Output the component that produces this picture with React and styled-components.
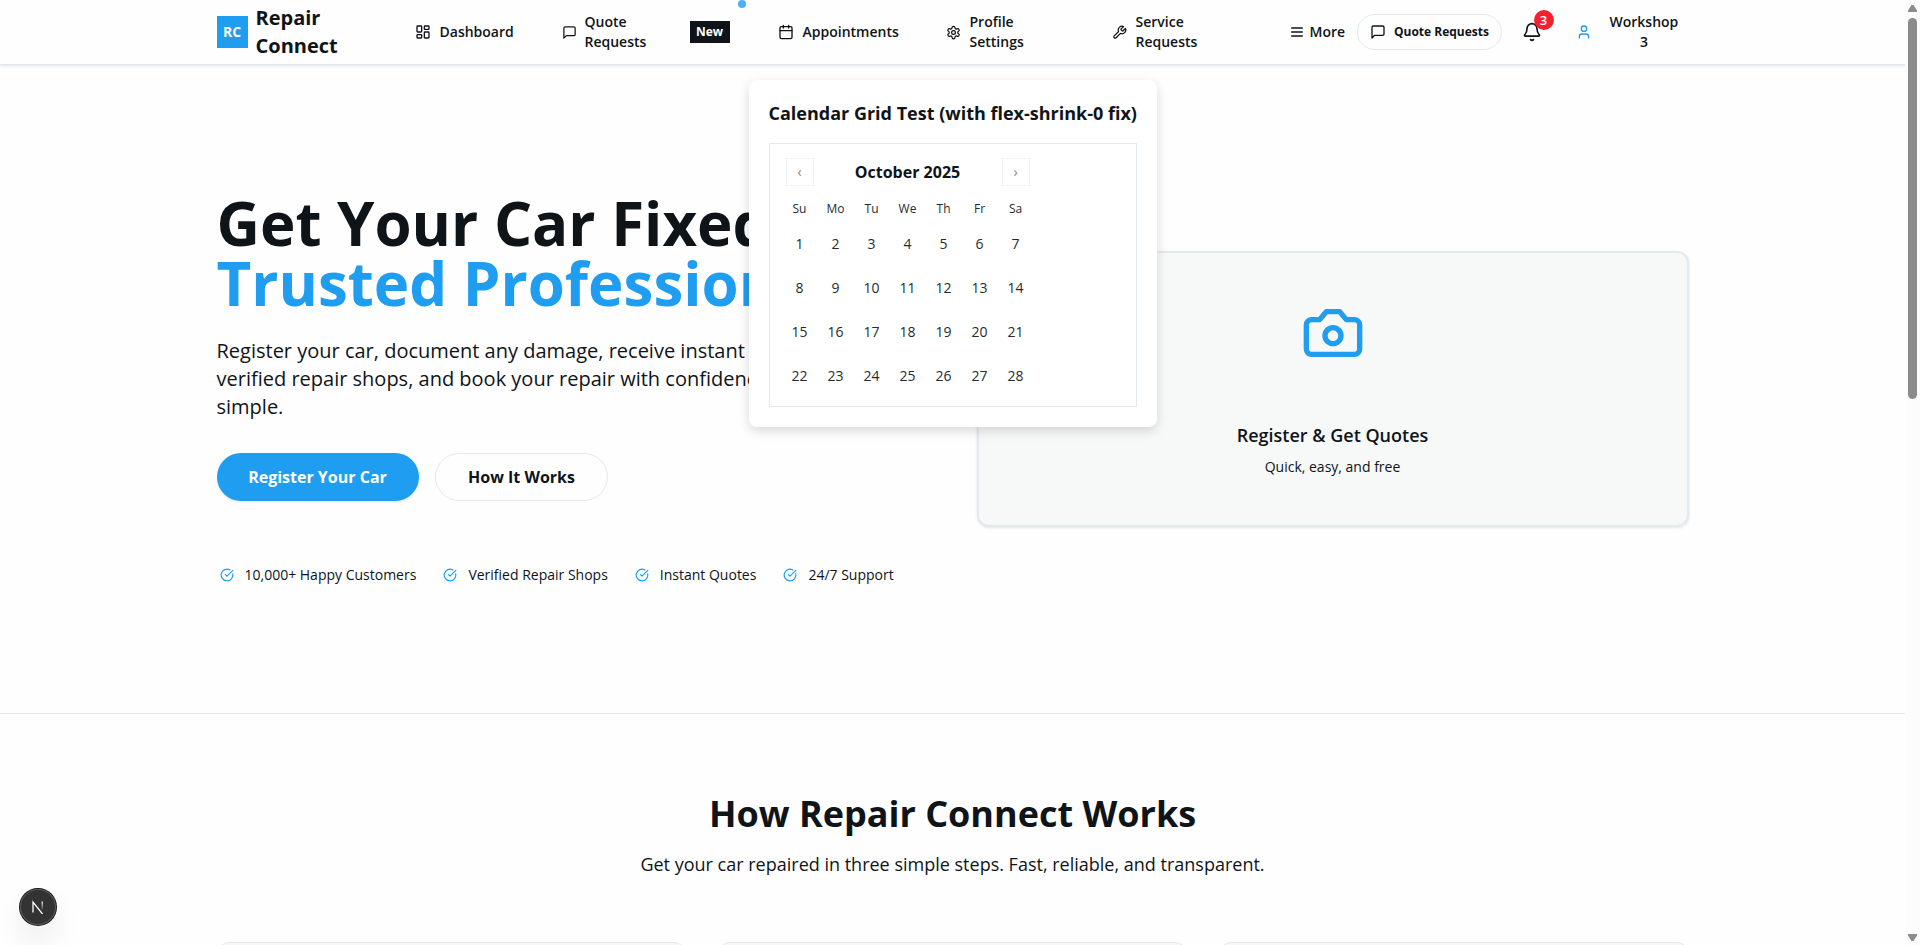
import React from "react";
import styled, { createGlobalStyle, css } from "styled-components";

const Global = createGlobalStyle`
  * { box-sizing: border-box; }
  html, body { margin: 0; height: 945px; overflow: hidden; }
  body { background: #fefefe; color: #0f1419; font-family: "Open Sans", "Noto Sans", sans-serif; }
  h1, h2, h3, p { margin: 0; }
  button { font: inherit; color: inherit; background: none; border: 0; padding: 0; }
`;

const Window = styled.div`
  display: flex;
  width: 1920px;
  height: 945px;
  overflow: hidden;
  position: relative;
`;
const Page = styled.div`
  width: 1905px;
  height: 945px;
  overflow: hidden;
  display: flex;
  flex-direction: column;
`;
const Header = styled.header`
  height: 65px;
  flex: none;
  border-bottom: 1px solid #dfe8f0;
  box-shadow: 0 1px 3px rgba(0, 0, 0, 0.1);
  padding: 0 216.5px;
  display: flex;
  align-items: center;
  font-size: 14px;
  line-height: 20px;
  font-weight: 600;
  position: relative;
  background: #fefefe;
`;
const LogoMark = styled.div`
  width: 31px;
  height: 32px;
  flex: none;
  background: #1e9df1;
  color: #fff;
  font-weight: 700;
  font-size: 14px;
  display: grid;
  place-items: center;
`;
const LogoText = styled.div`
  font-size: 20px;
  line-height: 28px;
  font-weight: 700;
  width: 82px;
  margin: 0 77px 0 8px;
`;
const Nav = styled.nav`
  display: flex;
  align-items: center;
  height: 64px;
  flex: none;
`;
const NavItem = styled.a`
  display: flex;
  align-items: center;
  gap: ${(p) => p.$gap ?? 9}px;
  width: ${(p) => p.$w}px;
  flex: none;
  svg { flex: none; }
`;
const NewBadge = styled.span`
  width: 40px;
  height: 22px;
  flex: none;
  background: #0f1419;
  color: #fff;
  font-size: 12px;
  line-height: 16px;
  font-weight: 700;
  display: grid;
  place-items: center;
  margin-right: 48px;
`;
const Dot = styled.i`
  position: absolute;
  left: 738px;
  top: 0;
  width: 8px;
  height: 8px;
  border-radius: 50%;
  background: #4bb1f4;
`;
const QuoteButton = styled.button`
  width: 145px;
  height: 36px;
  flex: none;
  border: 1px solid #e1eaef;
  border-radius: 18px;
  display: flex;
  align-items: center;
  justify-content: center;
  gap: 8px;
  padding-left: 1px;
  font-size: 12px;
  font-weight: 700;
  white-space: nowrap;
  svg { flex: none; }
`;
const BellButton = styled.button`
  position: relative;
  width: 20px;
  height: 20px;
  margin-left: 20px;
  flex: none;
`;
const Count = styled.span`
  position: absolute;
  left: 12px;
  top: -12px;
  width: 20px;
  height: 20px;
  border-radius: 50%;
  background: #f4212e;
  color: #fff;
  font-size: 13px;
  line-height: 20px;
  text-align: center;
`;
const User = styled.div`
  display: flex;
  align-items: center;
  gap: 18px;
  margin-left: 34px;
  text-align: center;
  svg { color: #1e9df1; }
`;

const Hero = styled.section`
  height: 649px;
  flex: none;
  padding: 125px 216.5px 0;
  display: grid;
  grid-template-columns: 712px 712px;
  column-gap: 48px;
  border-bottom: 1px solid #dfe9ec;
`;
const HeroText = styled.div`
  white-space: nowrap;
`;
const Title = styled.h1`
  font-size: 60px;
  line-height: 60px;
  font-weight: 700;
  padding-top: 3px;
  span { display: block; color: #1e9df1; }
`;
const Lead = styled.p`
  margin-top: 24px;
  font-size: 20px;
  line-height: 28px;
`;
const Actions = styled.div`
  display: flex;
  gap: 16px;
  margin-top: 32px;
`;
const ActionButton = styled.button`
  height: 48px;
  width: ${(p) => p.$w}px;
  border-radius: 24px;
  font-size: 16px;
  font-weight: 700;
  ${(p) =>
    p.$primary
      ? css`background: #1e9df1; color: #fff; box-shadow: 0 1px 3px rgba(0, 0, 0, 0.1);`
      : css`border: 1px solid #e1eaef; padding-left: 1px;`}
`;
const Features = styled.div`
  display: flex;
  gap: 27px;
  margin-top: 64px;
  padding-left: 3px;
`;
const Feature = styled.div`
  display: flex;
  align-items: center;
  gap: 11px;
  font-size: 14px;
  line-height: 20px;
  svg { color: #1e9df1; }
`;
const QuoteCard = styled.div`
  margin-top: 61px;
  height: 276px;
  border: 2px solid #e1eaef;
  border-radius: 12px;
  background: #f7f8f8;
  box-shadow: 0 1px 3px rgba(0, 0, 0, 0.1);
  display: flex;
  flex-direction: column;
  align-items: center;
  padding-top: 48px;
  svg { color: #1e9df1; flex: none; }
  h3 { margin-top: 56px; font-size: 18px; line-height: 28px; font-weight: 600; }
  p { margin-top: 8px; font-size: 14px; line-height: 20px; }
`;

const Steps = styled.section`
  padding: 80px 216.5px 0;
  text-align: center;
  h2 { font-size: 36px; line-height: 40px; font-weight: 700; }
  > p { margin-top: 16px; font-size: 18px; line-height: 28px; }
`;
const StepGrid = styled.div`
  display: grid;
  grid-template-columns: repeat(3, 1fr);
  gap: 32px;
  margin-top: 64px;
`;
const StepCard = styled.article`
  height: 240px;
  border: 1px solid #e1eaef;
  border-radius: 12px;
  background: #f7f8f8;
`;

const Popover = styled.div`
  position: absolute;
  left: 748.5px;
  top: 80px;
  width: 408px;
  height: 347px;
  padding: 20px;
  border-radius: 8px;
  background: #fff;
  box-shadow: 0 4px 12px rgba(0, 0, 0, 0.15);
  h3 { font-size: 18px; line-height: 27px; font-weight: 700; white-space: nowrap; }
`;
const Calendar = styled.div`
  margin-top: 16px;
  height: 264px;
  border: 1px solid #e1eaef;
  padding: 12px;
`;
const Caption = styled.div`
  width: 252px;
  height: 32px;
  padding: 2px 4px;
  display: flex;
  align-items: start;
  justify-content: space-between;
  font-size: 16px;
  line-height: 28px;
  font-weight: 700;
`;
const NavButton = styled.button`
  width: 28px;
  height: 28px;
  border: 1px solid #f0f4f7;
  font-size: 14px;
  line-height: 24px;
  font-weight: 400;
  color: #87898c;
`;
const Week = styled.div`
  display: grid;
  grid-template-columns: repeat(7, 36px);
  margin-top: 8px;
  height: 36px;
  line-height: 36px;
  font-size: 14px;
  text-align: center;
  color: #272b30;
  ${(p) => p.$head && css`margin: 12px 0 8px; height: 18px; line-height: 18px; font-size: 12px;`}
`;

const DevBadge = styled.div`
  position: absolute;
  left: 20px;
  top: 889px;
  width: 36px;
  height: 36px;
  border-radius: 50%;
  background: #333;
  box-shadow: 0 0 0 1px #171717, inset 0 0 0 1px #5a5a5a, 0 16px 32px -8px rgba(0, 0, 0, 0.24);
  display: grid;
  place-items: center;
`;
const Scrollbar = styled.div`
  width: 15px;
  height: 945px;
  background: #fcfcfc;
  display: flex;
  flex-direction: column;
  align-items: center;
  padding: 5px 0 4px;
  svg:last-child { margin-top: auto; }
`;
const Thumb = styled.div`
  width: 9px;
  height: 381px;
  margin-top: 6px;
  border-radius: 5px;
  background: #8b8b8b;
`;

const paths = {
  dashboard: <><rect width="7" height="9" x="3" y="3" rx="1" /><rect width="7" height="5" x="14" y="3" rx="1" /><rect width="7" height="9" x="14" y="12" rx="1" /><rect width="7" height="5" x="3" y="16" rx="1" /></>,
  message: <path d="M21 15a2 2 0 0 1-2 2H7l-4 4V5a2 2 0 0 1 2-2h14a2 2 0 0 1 2 2z" />,
  calendar: <><path d="M8 2v4M16 2v4M3 10h18" /><rect width="18" height="18" x="3" y="4" rx="2" /></>,
  settings: <><path d="M12.22 2h-.44a2 2 0 0 0-2 2v.18a2 2 0 0 1-1 1.73l-.43.25a2 2 0 0 1-2 0l-.15-.08a2 2 0 0 0-2.73.73l-.22.38a2 2 0 0 0 .73 2.73l.15.1a2 2 0 0 1 1 1.72v.51a2 2 0 0 1-1 1.74l-.15.09a2 2 0 0 0-.73 2.73l.22.38a2 2 0 0 0 2.73.73l.15-.08a2 2 0 0 1 2 0l.43.25a2 2 0 0 1 1 1.73V20a2 2 0 0 0 2 2h.44a2 2 0 0 0 2-2v-.18a2 2 0 0 1 1-1.73l.43-.25a2 2 0 0 1 2 0l.15.08a2 2 0 0 0 2.73-.73l.22-.39a2 2 0 0 0-.73-2.73l-.15-.08a2 2 0 0 1-1-1.74v-.5a2 2 0 0 1 1-1.74l.15-.09a2 2 0 0 0 .73-2.73l-.22-.38a2 2 0 0 0-2.73-.73l-.15.08a2 2 0 0 1-2 0l-.43-.25a2 2 0 0 1-1-1.73V4a2 2 0 0 0-2-2z" /><circle cx="12" cy="12" r="3" /></>,
  wrench: <path d="M14.7 6.3a1 1 0 0 0 0 1.4l1.6 1.6a1 1 0 0 0 1.4 0l3.77-3.77a6 6 0 0 1-7.94 7.94l-6.91 6.91a2.12 2.12 0 0 1-3-3l6.91-6.91a6 6 0 0 1 7.94-7.94l-3.76 3.76z" />,
  menu: <path d="M4 6h16M4 12h16M4 18h16" />,
  bell: <><path d="M10.268 21a2 2 0 0 0 3.464 0" /><path d="M3.262 15.326A1 1 0 0 0 4 17h16a1 1 0 0 0 .74-1.673C19.41 13.956 18 12.499 18 8A6 6 0 0 0 6 8c0 4.499-1.411 5.956-2.738 7.326" /></>,
  user: <><path d="M19 21v-2a4 4 0 0 0-4-4H9a4 4 0 0 0-4 4v2" /><circle cx="12" cy="7" r="4" /></>,
  check: <><path d="M21.801 10A10 10 0 1 1 17 3.335" /><path d="m9 11 3 3L22 4" /></>,
  camera: <><path d="M14.5 4h-5L7 7H4a2 2 0 0 0-2 2v9a2 2 0 0 0 2 2h16a2 2 0 0 0 2-2V9a2 2 0 0 0-2-2h-3l-2.5-3z" /><circle cx="12" cy="13" r="3" /></>,
};
const Icon = ({ name, size = 16 }) => (
  <svg width={size} height={size} viewBox="0 0 24 24" fill="none" stroke="currentColor" strokeWidth="2" strokeLinecap="round" strokeLinejoin="round">
    {paths[name]}
  </svg>
);
const Arrow = ({ down }) => (
  <svg width="9" height="7" viewBox="0 0 9 7">
    <path d={down ? "M0 0h9v1.5L5.5 7h-2L0 1.5z" : "M0 7h9V5.5L5.5 0h-2L0 5.5z"} fill="#8b8b8b" />
  </svg>
);

const features = ["10,000+ Happy Customers", "Verified Repair Shops", "Instant Quotes", "24/7 Support"];
const days = ["Su", "Mo", "Tu", "We", "Th", "Fr", "Sa"];

export default function App() {
  return (
    <Window>
      <Global />
      <Page>
        <Header>
          <LogoMark>RC</LogoMark>
          <LogoText>Repair Connect</LogoText>
          <Nav>
            <NavItem $w={147}><Icon name="dashboard" /><span>Dashboard</span></NavItem>
            <NavItem $w={128} $gap={8}><Icon name="message" size={15} /><span>Quote<br />Requests</span></NavItem>
            <NewBadge>New</NewBadge>
            <NavItem $w={168}><Icon name="calendar" /><span>Appointments</span></NavItem>
            <NavItem $w={166}><Icon name="settings" size={15} /><span>Profile<br />Settings</span></NavItem>
            <NavItem $w={177}><Icon name="wrench" size={15} /><span>Service<br />Requests</span></NavItem>
            <NavItem $w={68} $gap={5}><Icon name="menu" /><span>More</span></NavItem>
          </Nav>
          <QuoteButton><Icon name="message" /><span>Quote Requests</span></QuoteButton>
          <BellButton><Icon name="bell" size={20} /><Count>3</Count></BellButton>
          <User><Icon name="user" /><span>Workshop<br />3</span></User>
          <Dot />
        </Header>
        <Hero>
          <HeroText>
            <Title>Get Your Car Fixed by<span>Trusted Professionals</span></Title>
            <Lead>
              Register your car, document any damage, receive instant quotes from<br />
              verified repair shops, and book your repair with confidence. It's that<br />
              simple.
            </Lead>
            <Actions>
              <ActionButton $primary $w={202}>Register Your Car</ActionButton>
              <ActionButton $w={173}>How It Works</ActionButton>
            </Actions>
            <Features>
              {features.map((f) => <Feature key={f}><Icon name="check" size={14} /><span>{f}</span></Feature>)}
            </Features>
          </HeroText>
          <QuoteCard>
            <Icon name="camera" size={64} />
            <h3>Register &amp; Get Quotes</h3>
            <p>Quick, easy, and free</p>
          </QuoteCard>
        </Hero>
        <Steps>
          <h2>How Repair Connect Works</h2>
          <p>Get your car repaired in three simple steps. Fast, reliable, and transparent.</p>
          <StepGrid><StepCard /><StepCard /><StepCard /></StepGrid>
        </Steps>
      </Page>
      <Scrollbar><Arrow /><Thumb /><Arrow down /></Scrollbar>
      <Popover>
        <h3>Calendar Grid Test (with flex-shrink-0 fix)</h3>
        <Calendar>
          <Caption><NavButton>‹</NavButton><span>October 2025</span><NavButton>›</NavButton></Caption>
          <Week $head>{days.map((d) => <span key={d}>{d}</span>)}</Week>
          {[0, 1, 2, 3].map((w) => (
            <Week key={w}>{days.map((d, i) => <span key={d}>{w * 7 + i + 1}</span>)}</Week>
          ))}
        </Calendar>
      </Popover>
      <DevBadge>
        <svg width="14" height="14" viewBox="0 0 14 14" fill="none">
          <defs>
            <linearGradient id="stem" x1="0" y1="0" x2="0" y2="1"><stop stopColor="#fff" /><stop offset="1" stopColor="#fff" stopOpacity="0" /></linearGradient>
          </defs>
          <path d="M2 12.5V2L11.5 14" stroke="#fff" strokeWidth="1.3" />
          <rect x="10.6" y="1.5" width="1.3" height="9" fill="url(#stem)" />
        </svg>
      </DevBadge>
    </Window>
  );
}
